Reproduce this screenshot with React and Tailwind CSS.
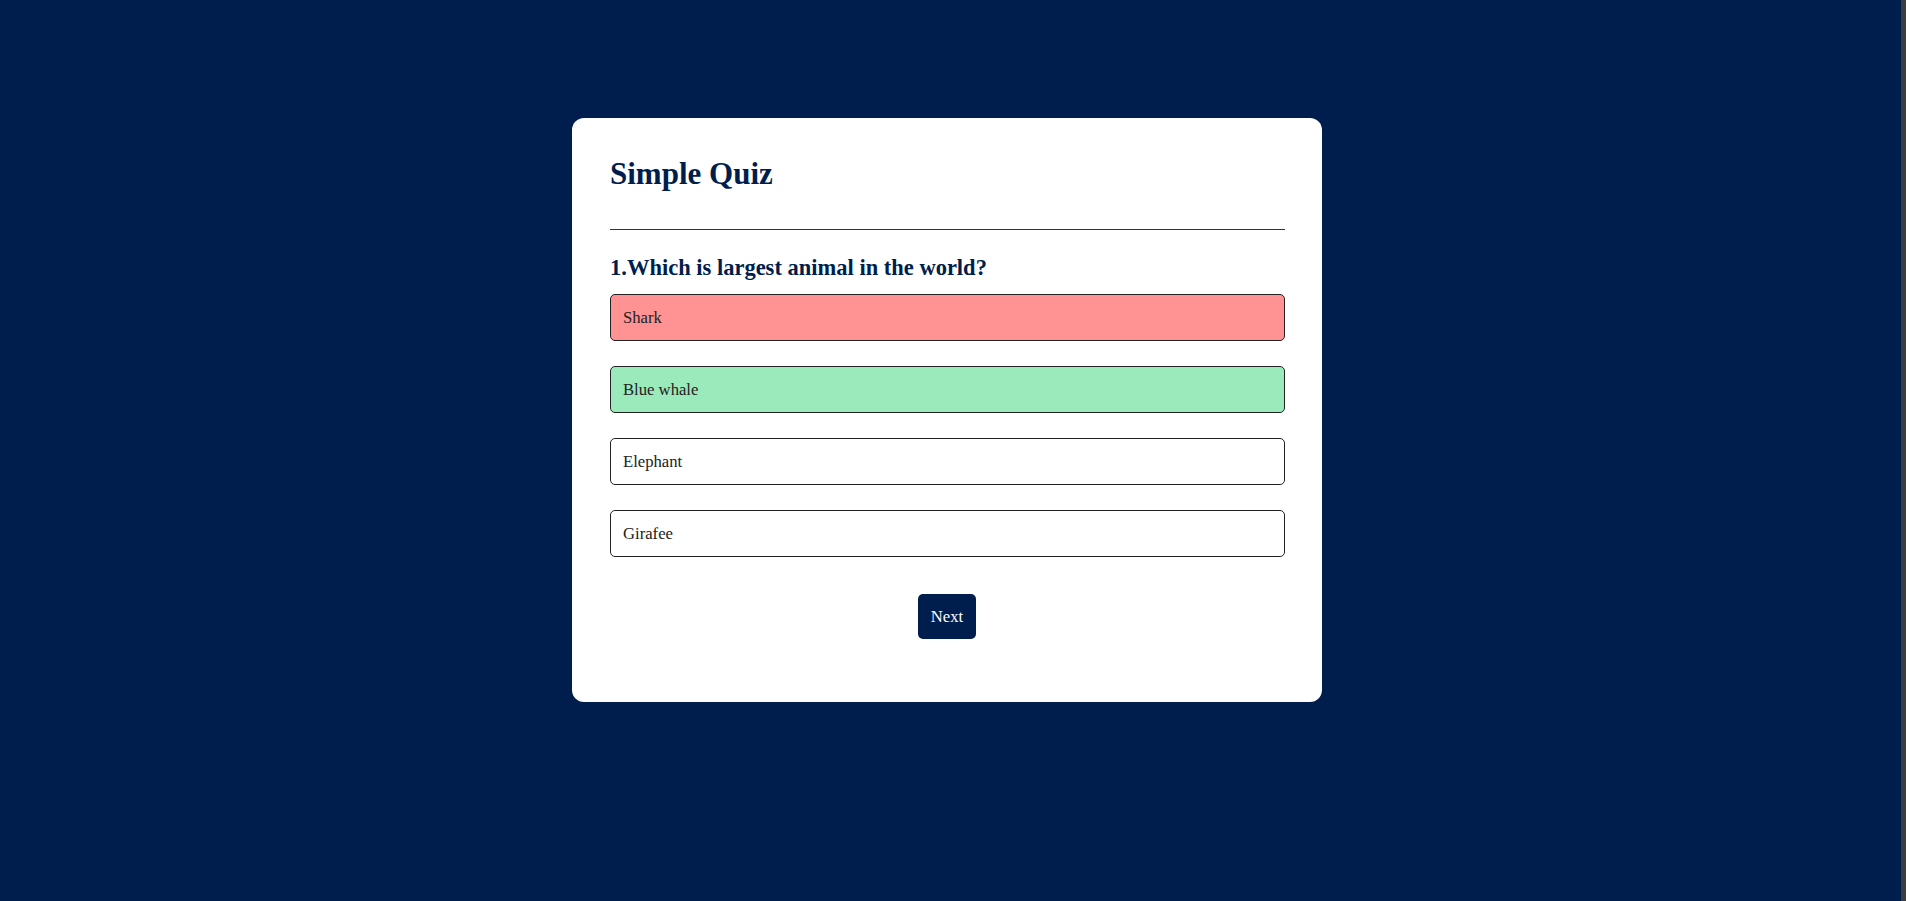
const options = [
  { text: 'Shark', state: 'wrong' },
  { text: 'Blue whale', state: 'right' },
  { text: 'Elephant', state: '' },
  { text: 'Girafee', state: '' },
];

function Option({ text, state }) {
  const bg = state === 'wrong' ? 'bg-[#ff9393]' : state === 'right' ? 'bg-[#9aeabc]' : 'bg-white';
  return (
    <button
      className={`w-full h-[47px] flex items-center px-[12px] pb-[1px] border border-[#222] rounded-[5px] text-left text-[16.67px] text-[#222] ${bg}`}
    >
      {text}
    </button>
  );
}

export default function App() {
  return (
    <div className="min-h-screen flex bg-[#001e4d] font-['Liberation_Serif',serif]">
      <div className="flex-1 flex justify-center items-start pr-[7px]">
        <div className="mt-[118px] w-[750px] bg-white rounded-[12px] pl-[38px] pr-[37px] pt-[38px] pb-[63px]">
          <h1 className="text-[31px] leading-[36px] font-bold text-[#001e4d] pb-[37px] border-b border-[#333]">
            Simple Quiz
          </h1>
          <div className="pt-[25px]">
            <h2 className="text-[22.5px] leading-[26px] font-bold text-[#001e4d]">
              1.Which is largest animal in the world?
            </h2>
            <div className="mt-[13px] flex flex-col gap-[25px]">
              {options.map((o) => (
                <Option key={o.text} {...o} />
              ))}
            </div>
            <div className="mt-[37px] flex justify-center pr-[1px]">
              <button className="h-[45px] px-[12.5px] rounded-[5px] bg-[#001e4d] text-white text-[16.67px]">
                Next
              </button>
            </div>
          </div>
        </div>
      </div>
      <div className="w-[5px] bg-[#3d3d3d]" />
    </div>
  );
}
